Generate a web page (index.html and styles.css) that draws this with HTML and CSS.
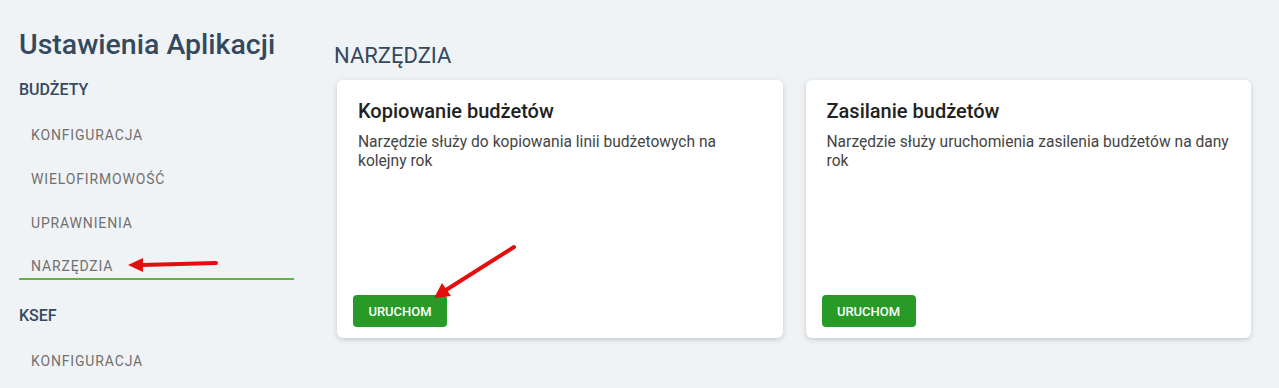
FILE: index.html
```html
<!DOCTYPE html>
<html lang="pl">
<head>
  <meta charset="UTF-8">
  <title>Ustawienia Aplikacji</title>
  <link rel="stylesheet" href="styles.css">
</head>
<body>
  <div class="layout">
    <aside class="sidebar">
      <h1 class="app-title">Ustawienia Aplikacji</h1>
      <div class="group-title">BUDŻETY</div>
      <a class="nav-item" href="#">KONFIGURACJA</a>
      <a class="nav-item" href="#">WIELOFIRMOWOŚĆ</a>
      <a class="nav-item" href="#">UPRAWNIENIA</a>
      <a class="nav-item active" href="#">NARZĘDZIA</a>
      <div class="group-title">KSEF</div>
      <a class="nav-item" href="#">KONFIGURACJA</a>
    </aside>

    <main class="content">
      <h2 class="section-title">NARZĘDZIA</h2>
      <div class="cards">
        <div class="card">
          <div class="card-body">
            <h3 class="card-title">Kopiowanie budżetów</h3>
            <p class="card-text">Narzędzie służy do kopiowania linii budżetowych na kolejny rok</p>
          </div>
          <div class="card-actions">
            <button class="btn">URUCHOM</button>
          </div>
        </div>
        <div class="card">
          <div class="card-body">
            <h3 class="card-title">Zasilanie budżetów</h3>
            <p class="card-text">Narzędzie służy uruchomienia zasilenia budżetów na dany rok</p>
          </div>
          <div class="card-actions">
            <button class="btn">URUCHOM</button>
          </div>
        </div>
      </div>
    </main>
  </div>

  <!-- red annotation arrows -->
  <svg class="annotations" width="1279" height="388" viewBox="0 0 1279 388">
    <g stroke="#e50e0e" stroke-width="4" stroke-linecap="round" fill="#e50e0e">
      <line x1="216" y1="263" x2="142" y2="265" />
      <polygon points="128,265 143,258 143,272" stroke="none" />
      <line x1="514" y1="247" x2="446" y2="290" />
      <polygon points="434,298 442,283 451,296" stroke="none" />
    </g>
  </svg>
</body>
</html>
```

FILE: styles.css
```css
body {
  margin: 0;
  background-color: #f0f3f5;
  font-family: Roboto, "Noto Sans", Arial, sans-serif;
  height: 388px;
  overflow: hidden;
}

.layout {
  display: flex;
  padding: 0 28px 0 19px;
}

.sidebar {
  width: 275px;
  flex-shrink: 0;
  display: flex;
  flex-direction: column;
}

.app-title {
  margin: 28px 0 0;
  font-size: 28.5px;
  font-weight: 500;
  line-height: 34px;
  color: #34495e;
}

.group-title {
  height: 44px;
  margin-bottom: 2px;
  display: flex;
  align-items: center;
  font-size: 16px;
  font-weight: 500;
  color: #34495e;
}

.sidebar .app-title + .group-title {
  margin-top: 5px;
}

.nav-item {
  height: 44px;
  display: flex;
  align-items: center;
  padding-left: 12px;
  font-size: 14px;
  font-weight: 400;
  letter-spacing: 0.85px;
  color: #707070;
  text-decoration: none;
}

.nav-item.active {
  box-sizing: border-box;
  height: 35px;
  align-items: flex-start;
  padding-top: 13px;
  border-bottom: 2px solid #66b33c;
  margin-bottom: 13px;
}

.content {
  flex: 1;
  margin-left: 41px;
  display: flex;
  flex-direction: column;
}

.section-title {
  margin: 42px 0 10px -1px;
  font-size: 22px;
  font-weight: 400;
  line-height: 28px;
  color: #34495e;
}

.cards {
  display: grid;
  grid-template-columns: 1fr 1fr;
  gap: 23px;
  padding-left: 2px;
}

.card {
  height: 258px;
  background-color: #fff;
  border-radius: 6px;
  box-shadow: 0 2px 4px rgba(0, 0, 0, 0.12), 0 1px 8px rgba(0, 0, 0, 0.06);
  display: flex;
  flex-direction: column;
}

.card-body {
  flex: 1;
  padding: 18px 16px 0 21px;
}

.card-title {
  margin: 0 0 9px;
  font-size: 20px;
  font-weight: 500;
  line-height: 26px;
  color: #222;
}

.card-text {
  margin: 0;
  font-size: 15.6px;
  line-height: 19px;
  color: #444;
}

.card-actions {
  padding: 0 16px 11px;
}

.btn {
  height: 32px;
  width: 94px;
  border: none;
  border-radius: 4px;
  background-color: #289a27;
  color: #fff;
  font-family: Roboto, Arial, sans-serif;
  font-size: 13px;
  font-weight: 500;
  cursor: pointer;
}

.annotations {
  position: absolute;
  left: 0;
  top: 0;
  pointer-events: none;
}
```
